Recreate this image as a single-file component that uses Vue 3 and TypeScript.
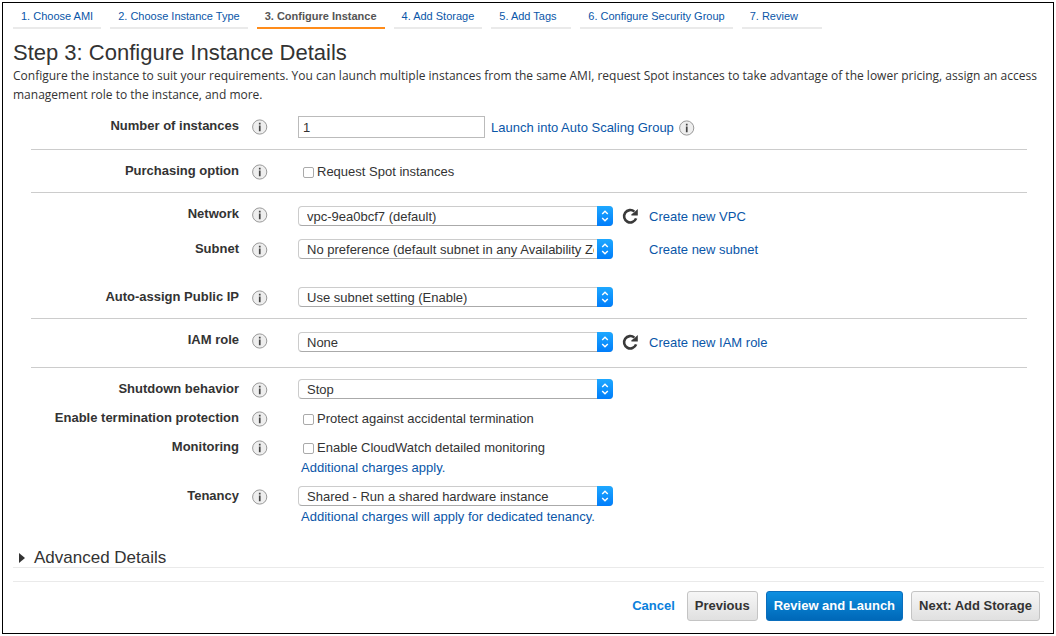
<script setup lang="ts">
import { defineComponent, h, ref } from 'vue'

interface Step {
  label: string
  current?: boolean
}

const steps: Step[] = [
  { label: '1. Choose AMI' },
  { label: '2. Choose Instance Type' },
  { label: '3. Configure Instance', current: true },
  { label: '4. Add Storage' },
  { label: '5. Add Tags' },
  { label: '6. Configure Security Group' },
  { label: '7. Review' },
]

const count = ref('1')
const spot = ref(false)
const protect = ref(false)
const monitoring = ref(false)

const InfoIcon = defineComponent({
  props: { topic: { type: String, required: true } },
  setup(props) {
    return () =>
      h('button', { type: 'button', class: 'info', 'aria-label': `About ${props.topic}` }, [
        h('svg', { viewBox: '0 0 16 16', width: 16, height: 16, 'aria-hidden': 'true' }, [
          h('circle', { cx: 7.7, cy: 8, r: 7.1, fill: '#eee', stroke: '#999', 'stroke-width': 1 }),
          h('path', { d: 'M6.9 3.8h1.7v1.7H6.9zM6.9 6.5h1.7v5.7H6.9z', fill: '#444' }),
        ]),
      ])
  },
})

const RefreshIcon = defineComponent({
  props: { label: { type: String, required: true } },
  setup(props) {
    return () =>
      h('button', { type: 'button', class: 'refresh', 'aria-label': props.label }, [
        h('svg', { viewBox: '0 0 17 17', width: 17, height: 17, 'aria-hidden': 'true' }, [
          h('path', {
            d: 'M12.4 3.6A6.2 6.2 0 1 0 14.1 10.4',
            fill: 'none',
            stroke: '#3a3a3a',
            'stroke-width': 2.6,
          }),
          h('path', { d: 'M15.8 1v6.6H9.4V6.2L12 4.6z', fill: '#3a3a3a' }),
        ]),
      ])
  },
})

const SelectBox = defineComponent({
  props: {
    id: { type: String, required: true },
    text: { type: String, required: true },
  },
  setup(props) {
    return () =>
      h('span', { class: 'select' }, [
        h('select', { id: props.id }, [h('option', props.text)]),
        h('span', { class: 'stepper', 'aria-hidden': 'true' }, [
          h('svg', { viewBox: '0 0 16 20', width: 16, height: 20 }, [
            h('path', {
              d: 'M5.2 8L8 5.2L10.8 8M5.2 12L8 14.8L10.8 12',
              fill: 'none',
              stroke: '#fff',
              'stroke-width': 1.4,
            }),
          ]),
        ]),
      ])
  },
})
</script>

<template>
  <main class="wizard">
    <nav class="steps" aria-label="Wizard steps">
      <a
        v-for="s in steps"
        :key="s.label"
        href="#"
        class="step"
        :class="{ current: s.current }"
        :aria-current="s.current ? 'step' : undefined"
        >{{ s.label }}</a
      >
    </nav>

    <header class="intro">
      <h1>Step 3: Configure Instance Details</h1>
      <p>
        Configure the instance to suit your requirements. You can launch multiple instances from the
        same AMI, request Spot instances to take advantage of the lower pricing, assign an access
        management role to the instance, and more.
      </p>
    </header>

    <form class="form" @submit.prevent>
      <section>
        <div class="row">
          <label class="name" for="count">Number of instances</label>
          <InfoIcon topic="Number of instances" />
          <div class="control">
            <input id="count" v-model="count" class="text" type="text" />
            <a href="#" class="after-input">Launch into Auto Scaling Group</a>
            <InfoIcon topic="Auto Scaling Group" />
          </div>
        </div>
      </section>

      <section>
        <div class="row">
          <span class="name">Purchasing option</span>
          <InfoIcon topic="Purchasing option" />
          <div class="control">
            <label class="check"><input v-model="spot" type="checkbox" />Request Spot instances</label>
          </div>
        </div>
      </section>

      <section>
        <div class="row lead">
          <label class="name" for="network">Network</label>
          <InfoIcon topic="Network" />
          <div class="control">
            <SelectBox id="network" text="vpc-9ea0bcf7 (default)" />
            <RefreshIcon label="Refresh networks" />
            <a href="#">Create new VPC</a>
          </div>
        </div>
        <div class="row near">
          <label class="name" for="subnet">Subnet</label>
          <InfoIcon topic="Subnet" />
          <div class="control">
            <SelectBox id="subnet" text="No preference (default subnet in any Availability Zone)" />
            <a href="#" class="no-refresh">Create new subnet</a>
          </div>
        </div>
        <div class="row apart">
          <label class="name" for="public-ip">Auto-assign Public IP</label>
          <InfoIcon topic="Auto-assign Public IP" />
          <div class="control">
            <SelectBox id="public-ip" text="Use subnet setting (Enable)" />
          </div>
        </div>
      </section>

      <section>
        <div class="row lead">
          <label class="name" for="iam">IAM role</label>
          <InfoIcon topic="IAM role" />
          <div class="control">
            <SelectBox id="iam" text="None" />
            <RefreshIcon label="Refresh roles" />
            <a href="#">Create new IAM role</a>
          </div>
        </div>
      </section>

      <section>
        <div class="row">
          <label class="name" for="shutdown">Shutdown behavior</label>
          <InfoIcon topic="Shutdown behavior" />
          <div class="control">
            <SelectBox id="shutdown" text="Stop" />
          </div>
        </div>
        <div class="row near">
          <span class="name">Enable termination protection</span>
          <InfoIcon topic="Enable termination protection" />
          <div class="control">
            <label class="check"
              ><input v-model="protect" type="checkbox" />Protect against accidental termination</label
            >
          </div>
        </div>
        <div class="row near">
          <span class="name">Monitoring</span>
          <InfoIcon topic="Monitoring" />
          <div class="control">
            <label class="check"
              ><input v-model="monitoring" type="checkbox" />Enable CloudWatch detailed monitoring</label
            >
          </div>
          <a href="#" class="note">Additional charges apply.</a>
        </div>
        <div class="row near">
          <label class="name" for="tenancy">Tenancy</label>
          <InfoIcon topic="Tenancy" />
          <div class="control">
            <SelectBox id="tenancy" text="Shared - Run a shared hardware instance" />
          </div>
          <a href="#" class="note">Additional charges will apply for dedicated tenancy.</a>
        </div>
      </section>
    </form>

    <h2 class="advanced">
      <button type="button" aria-expanded="false">
        <svg viewBox="0 0 6 10" width="6" height="10" aria-hidden="true">
          <path d="M0 0L6 5L0 10z" fill="#333" />
        </svg>
        Advanced Details
      </button>
    </h2>

    <footer class="actions">
      <a href="#" class="cancel">Cancel</a>
      <button type="button">Previous</button>
      <button type="button" class="primary">Review and Launch</button>
      <button type="button">Next: Add Storage</button>
    </footer>
  </main>
</template>

<style>
body {
  background: #fff;
}
</style>

<style scoped>
.wizard {
  box-sizing: border-box;
  margin: 2px;
  padding: 0 9px 12px 10px;
  border: 1px solid #000;
  color: #333;
  font: 13px/20px "Liberation Sans", Arial, sans-serif;
}

.wizard :deep(button),
.wizard :deep(input),
.wizard :deep(select) {
  font: inherit;
  color: inherit;
}

a {
  color: #0a56a8;
  text-decoration: none;
}

.steps {
  display: flex;
  gap: 9px;
}

.step {
  box-sizing: border-box;
  min-width: 80px;
  padding: 3px 8px 1px;
  border-bottom: 2px solid #eaeaea;
  font-size: 11px;
  white-space: nowrap;
}

.step.current {
  border-color: #ff8c1a;
  color: #555;
  font-weight: bold;
}

.intro {
  padding: 10px 0 1px;
}

h1 {
  margin: 0;
  font-size: 22px;
  font-weight: normal;
  line-height: 27px;
}

p {
  margin: 0;
  font-family: "Open Sans", "Liberation Sans", sans-serif;
  font-size: 12px;
  line-height: 19px;
}

.form {
  margin: 0 17px 0 18px;
}

section {
  padding: 11px 0;
  border-bottom: 1px solid #ccc;
}

section:last-child {
  border-bottom: 0;
}

.row {
  display: grid;
  grid-template-columns: 208px 59px 1fr;
  align-items: start;
}

.row.near {
  margin-top: 9px;
}

.row.apart {
  margin-top: 28px;
}

.row.lead .control {
  padding: 2px 0 4px;
}

.name {
  text-align: right;
  font-weight: bold;
}

.row :deep(.info) {
  display: block;
  width: 16px;
  height: 16px;
  margin: 3px 0 0 13px;
  padding: 0;
  border: 0;
  background: none;
}

.row :deep(svg) {
  display: block;
}

.control {
  display: flex;
  align-items: center;
  height: 20px;
}

.control a {
  padding-top: 2px;
}

.control :deep(.info) {
  margin: 2px 0 0 5px;
}

.text {
  box-sizing: border-box;
  width: 187px;
  height: 22px;
  padding: 0 4px;
  border: 1px solid #bbb;
  background: #fff;
}

.control:has(.text) {
  height: 22px;
}

.after-input {
  margin-left: 6px;
}

.control :deep(.select) {
  display: grid;
  width: 315px;
  height: 20px;
}

.control :deep(.select select) {
  grid-area: 1 / 1;
  box-sizing: border-box;
  width: 100%;
  height: 20px;
  padding: 0 18px 0 8px;
  border: 1px solid #ccc;
  border-bottom-color: #aaa;
  border-radius: 4px;
  background: #fff;
  appearance: none;
}

.control :deep(.stepper) {
  grid-area: 1 / 1;
  justify-self: end;
  border-radius: 0 4px 4px 0;
  background: linear-gradient(#1ea8ff, #007dfa);
  pointer-events: none;
}

.control :deep(.refresh) {
  margin: 0 10px 0 9px;
  padding: 0;
  border: 0;
  background: none;
}

.no-refresh {
  margin-left: 36px;
}

.check {
  display: flex;
  align-items: center;
  gap: 3px;
  padding: 2px 0 0 5px;
  line-height: 18px;
}

.check input {
  box-sizing: border-box;
  width: 11px;
  height: 11px;
  margin: 0;
  border: 1px solid #aaa;
  border-radius: 2px;
  background: #fff;
  appearance: none;
}

.check input:checked {
  background: #0079f5;
}

.note {
  grid-column: 3;
  padding: 2px 0 0 3px;
  line-height: 18px;
}

.advanced {
  margin: 10px 0 0;
  border-bottom: 1px solid #eaeaea;
  font-size: 17px;
  font-weight: normal;
  line-height: 18px;
}

.advanced button {
  display: flex;
  align-items: center;
  gap: 9px;
  padding: 2px 6px 0;
  border: 0;
  background: none;
}

.actions {
  display: flex;
  justify-content: flex-end;
  align-items: center;
  gap: 8px;
  margin-top: 13px;
  padding: 9px 4px 0 0;
  border-top: 1px solid #eaeaea;
  font-weight: bold;
}

.actions button {
  height: 30px;
  padding: 0 7px;
  border: 1px solid #c4c4c4;
  border-radius: 3px;
  background: linear-gradient(#f6f6f6, #e0e0e0);
}

.actions .primary {
  border-color: #0a6ebd;
  background: linear-gradient(#0e8fe0, #0068b8);
  color: #fff;
}

.cancel {
  margin-right: 4px;
  color: #0a80dc;
}
</style>
